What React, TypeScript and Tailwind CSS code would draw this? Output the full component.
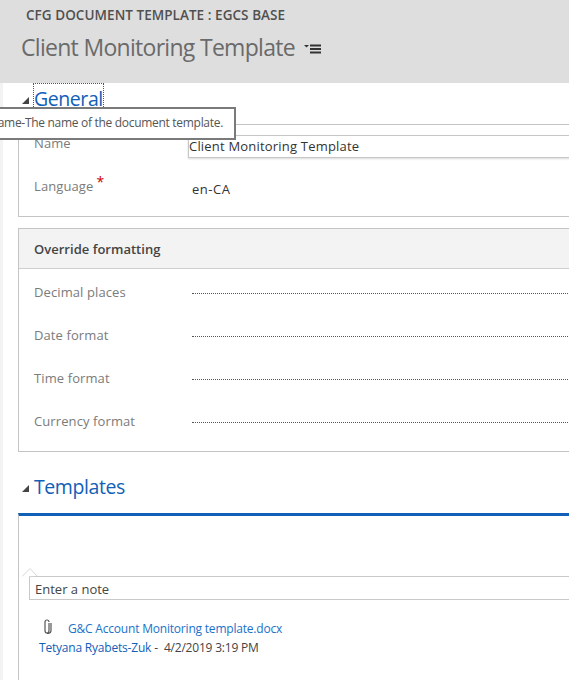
const font = { fontFamily: '"Open Sans", "Noto Sans", sans-serif' }

function SectionTitle({ title, focused }: { title: string; focused?: boolean }) {
  return (
    <div className="flex items-center h-[30px] pl-[22px]">
      <svg width="7" height="7" viewBox="0 0 7 7" className="mr-[5px] mt-[2px]">
        <path d="M7 0V7H0Z" fill="#444444" />
      </svg>
      <h2
        className={
          "text-[19.5px] leading-[30px] tracking-[-0.42px] text-[#1160b7] " +
          (focused ? "outline-1 outline-dotted outline-[#555555]" : "")
        }
      >
        {title}
      </h2>
    </div>
  )
}

function EmptyRow({ label }: { label: string }) {
  return (
    <div className="flex items-center h-[43px]">
      <div className="w-[173px] pl-[15px] text-[13px] leading-[18px] mt-[-4px] tracking-[0.1px] text-[#7b7b7b]">{label}</div>
      <div className="flex-1 border-b border-dotted border-[#555555] h-0 mt-[-1px]" />
    </div>
  )
}

export default function App() {
  return (
    <div className="relative w-[569px] h-[680px] overflow-hidden bg-white" style={font}>
      <header className="h-[83px] bg-[#dedede] pl-[26px] pt-[6px]">
        <div className="text-[13.5px] leading-[18px] font-semibold tracking-[0.05px] text-[#505050]">
          CFG DOCUMENT TEMPLATE : EGCS BASE
        </div>
        <div className="flex items-center mt-[7px] ml-[-5px]">
          <h1 className="text-[23px] leading-[32px] tracking-[-0.7px] text-[#6a6a6a]">Client Monitoring Template</h1>
          <svg width="18" height="12" viewBox="0 0 18 12" className="ml-[9px] mt-[3px]">
            <path d="M0 2H5L2.5 4.5Z" fill="#333333" />
            <path d="M6 2.5H17M6 6H17M6 9.5H17" stroke="#333333" strokeWidth="2" />
          </svg>
        </div>
      </header>

      <main className="border-l-[3px] border-[#f3f3f3] w-[700px] ml-0">
        <div className="pt-[1px] -ml-[3px]">
          <SectionTitle title="General" focused />
        </div>

        <section className="mt-[10px] ml-[15px] h-[93px] border border-r-0 border-[#c4c4c4] pt-[5px]">
          <div className="flex items-center h-[32px]">
            <div className="w-[169px] pl-[15px] text-[13px] leading-[18px] mt-[-7px] tracking-[0.1px] text-[#7b7b7b] flex">
              Name
              <span className="text-[#cc0000] ml-[4px] mt-[-2px] text-[14px] leading-[14px]">*</span>
            </div>
            <div className="flex-1 h-[23px] border border-[#c6c6c6] shadow-[0_1px_2px_rgba(0,0,0,0.15)] text-[13px] leading-[21px] tracking-[0.2px] text-[#333333]">
              Client Monitoring Template
            </div>
          </div>
          <div className="flex items-center h-[43px] mt-[8px]">
            <div className="w-[173px] pl-[15px] text-[13px] leading-[18px] mt-[-11px] tracking-[0.1px] text-[#7b7b7b] flex">
              Language
              <span className="text-[#cc0000] ml-[3px] mt-[-2px] text-[14px] leading-[14px]">*</span>
            </div>
            <div className="text-[13px] leading-[18px] mt-[-5px] tracking-[0.55px] text-[#333333]">en-CA</div>
          </div>
        </section>

        <section className="mt-[11px] ml-[15px] h-[224px] border border-r-0 border-[#c4c4c4]">
          <div className="h-[40px] bg-[#f3f3f3] border-b border-[#cfcfcf] pl-[15px] flex items-center text-[13px] font-semibold tracking-[0.02px] text-[#444444]">
            <span className="mt-[3px]">Override formatting</span>
          </div>
          <div className="pt-[3px]">
            <EmptyRow label="Decimal places" />
            <EmptyRow label="Date format" />
            <EmptyRow label="Time format" />
            <EmptyRow label="Currency format" />
          </div>
        </section>

        <div className="mt-[20px] -ml-[3px]">
          <SectionTitle title="Templates" />
        </div>

        <section className="mt-[11px] ml-[15px] h-[170px] border-l border-[#c4c4c4] border-t-[3px] border-t-[#1160b7]">
          <div className="relative mt-[60px] ml-[10px] h-[24px] border-l border-t border-b border-[#c9c9c9] pl-[5px] text-[13px] leading-[25px] text-[#444444]">
            <svg width="16" height="9" viewBox="0 0 16 9" className="absolute left-[-8px] top-[-9px]">
              <path d="M0 8.5L8 0.5L15 8" fill="white" stroke="#d8d8d8" />
            </svg>
            Enter a note
          </div>
          <div className="flex items-center mt-[20px] ml-[23px]">
            <svg width="10" height="15" viewBox="0 0 10 15" fill="none" stroke="#555555" strokeWidth="1.2" className="mr-[16px] mt-[-5px]">
              <path d="M7 4V11.5C7 13 6.2 14 5 14C3.8 14 3 13 3 11.5V3C3 1.8 3.8 1 5 1C6.2 1 7 1.8 7 3" />
              <path d="M9 4V11.5C9 13.5 7.5 14.5 5 14.5" />
            </svg>
            <a className="text-[12px] tracking-[-0.2px] text-[#1a72c9]">G&amp;C Account Monitoring template.docx</a>
          </div>
          <div className="flex items-center mt-[1px] ml-[20px] text-[12px] tracking-[-0.2px] text-[#444444]">
            <a className="text-[#1160b7]">Tetyana Ryabets-Zuk</a>
            <span className="ml-[3px]">-</span>
            <span className="ml-[6px]">4/2/2019 3:19 PM</span>
          </div>
        </section>
      </main>

      <div className="absolute left-[-3px] top-[107px] w-[239px] h-[33px] bg-white border-2 border-[#7a7a7a] text-[12px] leading-[28px] tracking-[-0.3px] text-[#555555] whitespace-nowrap overflow-hidden">
        <span className="block ml-[-10px]">Name-The name of the document template.</span>
      </div>
    </div>
  )
}
